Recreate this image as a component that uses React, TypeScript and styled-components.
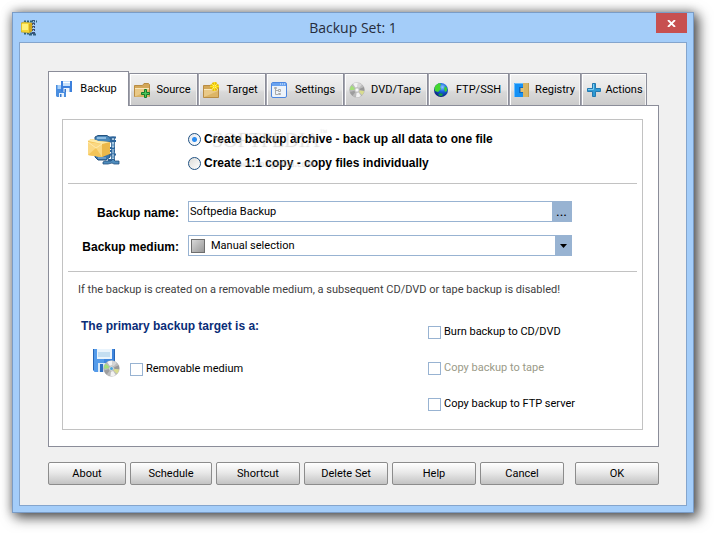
import React, { useState } from 'react';
import styled, { createGlobalStyle, css } from 'styled-components';

const GlobalStyle = createGlobalStyle`
  *, *::before, *::after { box-sizing: border-box; }
  body {
    margin: 0;
    background: #fff;
    color: #000;
    font: 11px/16px Roboto, "Liberation Sans", sans-serif;
  }
  button, input, select { font: inherit; color: inherit; margin: 0; }
`;

const Desktop = styled.div`
  padding: 12px 20px 20px 12px;
`;

const WindowFrame = styled.main`
  padding: 0 6px 6px;
  border: 1px solid #7a9cc6;
  background: #a4cdf9;
  box-shadow: 0 0 10px rgba(0, 0, 0, 0.35), 4px 4px 12px 1px rgba(0, 0, 0, 0.6);
`;

const TitleBar = styled.header`
  display: grid;
  grid-template-columns: 1fr auto 1fr;
  height: 29px;
`;

const TitleIcon = styled.span`
  align-self: center;
  display: flex;
  padding-left: 2px;
`;

const Title = styled.h1`
  margin: 0;
  align-self: center;
  font: 400 14px/20px "Open Sans", "Noto Sans", sans-serif;
  color: #262c3c;
`;

const CloseButton = styled.button`
  justify-self: end;
  display: flex;
  align-items: center;
  justify-content: center;
  width: 31px;
  height: 20px;
  padding: 0;
  border: 0;
  background: #c75050;
`;

const Client = styled.div`
  padding: 28px 27px 20px 28px;
  border: 1px solid #84a5cd;
  background: #f0f0f0;
`;

const TabList = styled.div`
  display: flex;
  align-items: flex-end;
`;

const Tab = styled.button<{ $width: number; $active?: boolean }>`
  display: flex;
  align-items: center;
  flex: 0 1 ${p => p.$width}px;
  height: 32px;
  padding: 1px 2px 0 4px;
  border: 1px solid #8b8d99;
  border-width: 1px 1px 0;
  background: linear-gradient(#f2f2f2, #e6e6e6 50%, #d9d9d9 58%, #cbcbcb);
  box-shadow: inset 1px 1px #fff, inset -1px 0 #f4f4f4;
  white-space: nowrap;

  & + & { border-left-color: #a4a5af; }

  ${p => p.$active && css`
    height: 35px;
    margin-bottom: -1px;
    padding: 0 5px 0 7px;
    background: #fff;
    box-shadow: none;
    position: relative;
  `}
`;

const TabText = styled.span`
  flex: 1;
  padding-left: 2px;
  text-align: center;
`;

const Panel = styled.section`
  padding: 13px 15px 16px 13px;
  border: 1px solid #8b8d99;
  background: #fff;
`;

const Group = styled.div`
  padding: 0 5px;
  border: 1px solid #c2c2c2;
`;

const Rule = styled.hr`
  margin: 0;
  border: 0;
  border-top: 1px solid #c2c2c2;
`;

const ModeSection = styled.div`
  position: relative;
  display: grid;
  grid-template-columns: 120px 1fr;
  align-items: center;
  padding: 7px 0 8px;
`;

const ModeIcon = styled.span`
  display: flex;
  padding-left: 20px;
`;

const ModeList = styled.div`
  display: flex;
  flex-direction: column;
`;

const ModeLabel = styled.label`
  display: flex;
  align-items: center;
  gap: 3px;
  height: 24px;
  font: 700 12px/16px "Liberation Sans", sans-serif;
`;

const Radio = styled.input`
  appearance: none;
  width: 13px;
  height: 13px;
  border: 1px solid #1f5182;
  border-radius: 50%;
  background: linear-gradient(135deg, #dcdcd8, #fff);

  &:checked {
    background: radial-gradient(circle, #2b8cf0 2px, transparent 3px), linear-gradient(135deg, #e4e8ee, #fff);
  }
`;

const Watermark = styled.div`
  position: absolute;
  left: 143px;
  top: 8px;
  pointer-events: none;
  color: rgba(255, 255, 255, 0.3);
  text-shadow: 1px 1px 1px rgba(0, 0, 0, 0.14);
  font: 400 20px/22px "Liberation Serif", serif;
`;

const WatermarkMark = styled.sup`
  font-size: 8px;
  line-height: 8px;
  vertical-align: top;
`;

const WatermarkSite = styled.div`
  padding: 6px 0 0 20px;
  font: 700 10px/14px "Liberation Serif", serif;
`;

const FieldSection = styled.div`
  display: grid;
  grid-template-columns: 111px 1fr;
  gap: 13px 9px;
  padding: 17px 65px 15px 0;
`;

const FieldLabel = styled.label`
  align-self: end;
  padding-bottom: 1px;
  text-align: right;
  font: 700 12px/16px "Liberation Sans", sans-serif;
`;

const FieldBox = styled.div`
  display: flex;
  align-items: center;
  height: 21px;
  border: 1px solid #98b3d2;
  background: #fff;
`;

const TextInput = styled.input`
  flex: 1;
  min-width: 0;
  height: 19px;
  padding: 0 1px;
  border: 0;
  outline: 0;
  background: none;
`;

const BrowseButton = styled.button`
  width: 19px;
  height: 19px;
  padding: 0;
  border: 0;
  background: #98b3d2;
  font: 400 14px/19px Roboto, sans-serif;
`;

const Swatch = styled.span`
  width: 14px;
  height: 14px;
  margin: 0 5px 0 2px;
  border: 1px solid #6e6e6e;
  background: linear-gradient(135deg, #d8d8d8, #989898);
`;

const Select = styled.select`
  appearance: none;
  flex: 1;
  min-width: 0;
  height: 19px;
  padding: 0 1px;
  border: 0;
  outline: 0;
  background: none;
`;

const SelectArrow = styled.span`
  display: flex;
  align-items: center;
  justify-content: center;
  width: 16px;
  height: 19px;
  background: #98b3d2;
`;

const Note = styled.p`
  margin: 0;
  padding: 10px 10px 0;
  color: #404040;
`;

const TargetSection = styled.div`
  display: grid;
  grid-template-columns: 360fr 209fr;
  padding-bottom: 17px;
`;

const PrimaryTarget = styled.div`
  display: flex;
  flex-direction: column;
  gap: 15px;
  padding: 20px 0 0 13px;
`;

const TargetHeading = styled.h2`
  margin: 0;
  color: #0a2d78;
  font: 700 12px/16px "Liberation Sans", sans-serif;
`;

const RemovableRow = styled.div`
  display: flex;
  align-items: flex-end;
  gap: 9px;
  padding-left: 12px;
`;

const ExtraTargets = styled.div`
  display: flex;
  flex-direction: column;
  gap: 20px;
  padding-top: 26px;
`;

const CheckLabel = styled.label<{ $disabled?: boolean }>`
  display: flex;
  align-items: center;
  gap: 3px;
  height: 16px;
  color: ${p => (p.$disabled ? '#9a9a88' : '#000')};
`;

const CheckBox = styled.input`
  appearance: none;
  width: 13px;
  height: 13px;
  border: 1px solid #98b3d2;
  background: #fff;

  &:checked { background: #98b3d2; box-shadow: inset 0 0 0 2px #fff; }
`;

const ButtonBar = styled.footer`
  display: flex;
  gap: 4px;
  padding-top: 15px;
`;

const PushButton = styled.button<{ $width?: number; $last?: boolean }>`
  flex: 0 1 ${p => p.$width ?? 84}px;
  height: 23px;
  padding: 0;
  border: 1px solid #8c8c8c;
  border-radius: 2px;
  background: linear-gradient(#fff, #e9e9e9 45%, #c3c3c3);
  ${p => p.$last && css`margin-left: auto;`}
`;

function ArchiveIcon({ size }: { size: number }) {
  return (
    <svg width={size} height={size} viewBox="0 0 32 32" aria-hidden="true">
      <path d="M7 5V2l3-1.500h9l4 3V7H8z" fill="#4a88ba" stroke="#24527f" />
      <path d="M9 3h9" stroke="#a6cceb" strokeWidth="1.500" />
      <path d="M7 19h15v3l-4 3h-8l-3-3z" fill="#3775ad" stroke="#24527f" />
      <path d="M10 23h8" stroke="#9dc3e2" />
      <path d="M23.500 2h3v24h-3z" fill="#76a9d1" stroke="#24527f" strokeWidth=".7" />
      <path d="M21 2.500h7M22 6h6M22 13h5M22 16h5M22 19.500h6M20 25h7" stroke="#2c659c" strokeWidth="2" />
      <path d="M25 3v22" stroke="#d8eaf6" strokeDasharray="2 2" />
      <path d="M15 27l2-1h6l2-2 2 2h4v3h-5l-2-1-4 1h-5z" fill="#4e8cbd" stroke="#24527f" strokeWidth=".8" />
      <path d="M0 6l3-2 5 1 2 1 11 1v11l-7 4-14-2z" fill="#f5c04e" />
      <path d="M0 7l14 2v13L0 20z" fill="#fbd882" />
      <path d="M14 9l8-2v12l-8 3z" fill="#ecb84a" />
      <path d="M0 20l8-7 6 9z" fill="#f3c458" />
      <path d="M0 7l8 6 6-4" fill="none" stroke="#ffefb8" strokeWidth=".8" />
      <path d="M0 6l3-2 5 1 2 1 12 1-8 2z" fill="#fdeaa8" />
    </svg>
  );
}

function TitleArchiveIcon() {
  return (
    <svg width="16" height="16" viewBox="0 0 16 16" aria-hidden="true">
      <path d="M3 1.500h8M3 13.500h8" stroke="#2c6278" strokeWidth="2" strokeDasharray="2 1" />
      <path d="M12.500 0v14" stroke="#3c4c78" strokeWidth="3" strokeDasharray="2 1" />
      <path d="M11 1.500h5M8 14.500h8" stroke="#31617e" strokeWidth="2" strokeDasharray="3 1" />
      <path d="M12.500 1v12" stroke="#a9cce0" strokeDasharray="1 2" />
      <path d="M0 3l3-1 8 1v8l-3 2-8-1z" fill="#f3d536" stroke="#a48a1a" strokeWidth=".5" />
      <path d="M1 4h6v6H1z" fill="#fff27a" />
      <path d="M8 4l3-1v8l-3 2z" fill="#d2a81d" />
    </svg>
  );
}

function FloppiesIcon() {
  return (
    <svg width="16" height="16" viewBox="0 0 16 16" aria-hidden="true">
      <path d="M0 4h10v12H1l-1-1z" fill="#4a8ee0" />
      <path d="M1.500 4h5v4h-5z" fill="#a9d0f8" />
      <path d="M3 12h5v4H3z" fill="#e9f3fd" />
      <path d="M4 13h1.500v3H4z" fill="#3a7cd0" />
      <path d="M5 0h11v11H6l-1-1z" fill="#3c80dc" />
      <path d="M7 0h7v5H7z" fill="#c8e2fb" />
      <path d="M7 1.500h7" stroke="#fff" />
      <path d="M7.500 7h6v4h-6z" fill="#edf5fd" />
      <path d="M8.500 8H10v3H8.500z" fill="#3473c8" />
    </svg>
  );
}

function FolderAddIcon() {
  return (
    <svg width="16" height="16" viewBox="0 0 16 16" aria-hidden="true">
      <path d="M.5 3.500h8l1.500-2h4.500l1 1v12H.5z" fill="#d3a758" stroke="#b98c43" />
      <path d="M1 6h14v8.500H1z" fill="#e9c987" />
      <path d="M1 6.500h14" stroke="#f9e7bb" />
      <path d="M1 14.500L15 8v6.500z" fill="#dcb566" />
      <path d="M10.500 7.500h2v3h3v2h-3v3h-2v-3h-3v-2h3z" fill="#4cc45a" stroke="#167c2a" />
    </svg>
  );
}

function FolderNewIcon() {
  return (
    <svg width="16" height="16" viewBox="0 0 16 16" aria-hidden="true">
      <path d="M.5 3.500h7l1 2h7v10H.5z" fill="#d3a758" stroke="#b98c43" />
      <path d="M1 7h14v8H1z" fill="#e9c987" />
      <path d="M1 7.500h14" stroke="#f9e7bb" />
      <path d="M1 15L15 9v6z" fill="#dcb566" />
      <circle cx="11.500" cy="4.500" r="3.200" fill="#fff27d" stroke="#e6be00" strokeWidth="2.400" strokeDasharray="1.800 .7" />
      <path d="M11.500 0v9M7 4.500h9" stroke="#ffe21c" />
    </svg>
  );
}

function SettingsIcon() {
  return (
    <svg width="16" height="16" viewBox="0 0 16 16" aria-hidden="true">
      <rect x=".5" y=".5" width="15" height="15" rx="1.500" fill="#edf3fa" stroke="#4c86e0" />
      <path d="M1 1h14v3H1z" fill="#6aa3ef" />
      <path d="M9 2h1m1 0h1m1 0h1" stroke="#e5f0ff" />
      <path d="M4.500 7v5.500H7M4.500 8.500H7" fill="none" stroke="#aaa" />
      <path d="M3.500 5.500h2v1h-2zM7.500 7.500h2v2h-2zM7.500 11.500h2v1h-2z" fill="#f6f6f6" stroke="#aaa" />
    </svg>
  );
}

function DiscShape() {
  return (
    <>
      <circle cx="8" cy="8" r="7.300" fill="#bcbcbc" stroke="#aaa" strokeWidth=".6" />
      <path d="M8 8L4 1.800A7.300 7.300 0 0 1 9 .8z" fill="#f3f3f3" />
      <path d="M8 8l1-7.200a7.300 7.300 0 0 1 4 2z" fill="#d6d6d6" />
      <path d="M8 8l6.800-3a7.300 7.300 0 0 1 .4 4z" fill="#989898" />
      <path d="M8 8l7.200 1a7.300 7.300 0 0 1-2 4z" fill="#d8dc8e" />
      <path d="M8 8l4 6.100A7.300 7.300 0 0 1 7 15.200z" fill="#f2f2f2" />
      <path d="M8 8l-4.500 5.700A7.300 7.300 0 0 1 1 10z" fill="#9d9d9d" />
      <path d="M8 8L.8 8A7.300 7.300 0 0 1 2.500 3.500z" fill="#a4df79" />
      <circle cx="8" cy="8" r="2.500" fill="#dedede" stroke="#aaa" strokeWidth=".6" />
      <circle cx="8" cy="8" r="1" fill="#fff" />
    </>
  );
}

function DiscIcon() {
  return <svg width="16" height="16" viewBox="0 0 16 16" aria-hidden="true"><DiscShape /></svg>;
}

function GlobeIcon() {
  return (
    <svg width="16" height="16" viewBox="0 0 16 16" aria-hidden="true">
      <defs>
        <radialGradient id="ocean" cx=".6" cy=".3" r=".75">
          <stop offset="0" stopColor="#8cc8ff" />
          <stop offset=".4" stopColor="#1767e0" />
          <stop offset="1" stopColor="#061a70" />
        </radialGradient>
      </defs>
      <circle cx="8" cy="8" r="7" fill="url(#ocean)" />
      <path d="M2.500 3.500L6 1l2 1-1 3 1 2-3 3-3-1c-.7-2-.5-4 .5-5.500z" fill="#43d62f" />
      <path d="M12 4l2 2v3l-2 1-1-3z" fill="#3acb35" />
      <path d="M7 11l3 1-1 2H7L5 13z" fill="#139a48" />
    </svg>
  );
}

function PuzzleIcon() {
  return (
    <svg width="16" height="16" viewBox="0 0 16 16" aria-hidden="true">
      <path d="M8 1h7v14H8z" fill="#d7b565" />
      <path d="M14.500 1v14" stroke="#c29d4e" />
      <path d="M0 1h9v4H5v6h4v4H0z" fill="#1591f5" />
      <path d="M5 5h4v6H5z" fill="#0a68c4" />
      <path d="M6.500 6H10v4H6.500z" fill="#e0bf72" />
      <path d="M.5 15V1.500H9" fill="none" stroke="#67bcff" />
    </svg>
  );
}

function PlusIcon() {
  return (
    <svg width="16" height="16" viewBox="0 0 16 16" aria-hidden="true">
      <path d="M6.500 1.500h3v5h5v3h-5v5h-3v-5h-5v-3h5z" fill="#2e9ad4" stroke="#2379b0" />
      <path d="M7.500 2v5.500H2" fill="none" stroke="#7dcdf2" />
    </svg>
  );
}

function RemovableIcon() {
  return (
    <svg width="28" height="28" viewBox="0 0 28 28" aria-hidden="true">
      <path d="M0 0h22v23H2l-2-2z" fill="#3e86de" />
      <path d="M0 0h11v23H2l-2-2z" fill="#549bea" />
      <path d="M4 0h15v10H4z" fill="#eaf4fc" />
      <path d="M5 3h12v5H5z" fill="#c4def1" />
      <path d="M5 14h12v9H5z" fill="#d8e9f8" />
      <path d="M7 15h3v8H7z" fill="#2f70c4" />
      <path d="M.5 0v21M21.500 0v22" stroke="#2565b8" />
      <g transform="translate(10 11) scale(1.060)"><DiscShape /></g>
      <circle cx="18.500" cy="19.500" r="1.500" fill="#48a7dc" />
    </svg>
  );
}

const tabs = [
  { name: 'Backup', width: 81, icon: <FloppiesIcon /> },
  { name: 'Source', width: 69, icon: <FolderAddIcon /> },
  { name: 'Target', width: 68, icon: <FolderNewIcon /> },
  { name: 'Settings', width: 78, icon: <SettingsIcon /> },
  { name: 'DVD/Tape', width: 84, icon: <DiscIcon /> },
  { name: 'FTP/SSH', width: 81, icon: <GlobeIcon /> },
  { name: 'Registry', width: 72, icon: <PuzzleIcon /> },
  { name: 'Actions', width: 66, icon: <PlusIcon /> },
];

const actions = [
  { name: 'About', width: 78 },
  { name: 'Schedule', width: 82 },
  { name: 'Shortcut' },
  { name: 'Delete Set' },
  { name: 'Help' },
  { name: 'Cancel' },
];

export default function App() {
  const [mode, setMode] = useState('archive');
  return (
    <Desktop>
      <GlobalStyle />
      <WindowFrame>
        <TitleBar>
          <TitleIcon><TitleArchiveIcon /></TitleIcon>
          <Title>Backup Set: 1</Title>
          <CloseButton type="button" aria-label="Close">
            <svg width="9" height="7" viewBox="0 0 9 7" aria-hidden="true">
              <path d="M1 0l7 7M8 0L1 7" stroke="#fff" strokeWidth="1.800" />
            </svg>
          </CloseButton>
        </TitleBar>
        <Client>
          <TabList role="tablist">
            {tabs.map((t, i) => (
              <Tab key={t.name} type="button" role="tab" aria-selected={i === 0} $width={t.width} $active={i === 0}>
                {t.icon}
                <TabText>{t.name}</TabText>
              </Tab>
            ))}
          </TabList>
          <Panel role="tabpanel" aria-label="Backup">
            <Group>
              <ModeSection>
                <ModeIcon><ArchiveIcon size={32} /></ModeIcon>
                <ModeList role="radiogroup" aria-label="Backup type">
                  <ModeLabel>
                    <Radio type="radio" name="mode" checked={mode === 'archive'} onChange={() => setMode('archive')} />
                    Create backup archive - back up all data to one file
                  </ModeLabel>
                  <ModeLabel>
                    <Radio type="radio" name="mode" checked={mode === 'copy'} onChange={() => setMode('copy')} />
                    Create 1:1 copy - copy files individually
                  </ModeLabel>
                </ModeList>
                <Watermark aria-hidden="true">
                  SOFTPEDIA<WatermarkMark>™</WatermarkMark>
                  <WatermarkSite>www.softpedia.com</WatermarkSite>
                </Watermark>
              </ModeSection>
              <Rule />
              <FieldSection>
                <FieldLabel htmlFor="backup-name">Backup name:</FieldLabel>
                <FieldBox>
                  <TextInput id="backup-name" type="text" defaultValue="Softpedia Backup" />
                  <BrowseButton type="button" aria-label="Browse">...</BrowseButton>
                </FieldBox>
                <FieldLabel htmlFor="backup-medium">Backup medium:</FieldLabel>
                <FieldBox>
                  <Swatch />
                  <Select id="backup-medium" defaultValue="manual">
                    <option value="manual">Manual selection</option>
                  </Select>
                  <SelectArrow>
                    <svg width="7" height="4" viewBox="0 0 7 4" aria-hidden="true">
                      <path d="M0 0h7L3.500 4z" />
                    </svg>
                  </SelectArrow>
                </FieldBox>
              </FieldSection>
              <Rule />
              <Note>If the backup is created on a removable medium, a subsequent CD/DVD or tape backup is disabled!</Note>
              <TargetSection>
                <PrimaryTarget>
                  <TargetHeading>The primary backup target is a:</TargetHeading>
                  <RemovableRow>
                    <RemovableIcon />
                    <CheckLabel><CheckBox type="checkbox" />Removable medium</CheckLabel>
                  </RemovableRow>
                </PrimaryTarget>
                <ExtraTargets>
                  <CheckLabel><CheckBox type="checkbox" />Burn backup to CD/DVD</CheckLabel>
                  <CheckLabel $disabled><CheckBox type="checkbox" disabled />Copy backup to tape</CheckLabel>
                  <CheckLabel><CheckBox type="checkbox" />Copy backup to FTP server</CheckLabel>
                </ExtraTargets>
              </TargetSection>
            </Group>
          </Panel>
          <ButtonBar>
            {actions.map(a => <PushButton key={a.name} type="button" $width={a.width}>{a.name}</PushButton>)}
            <PushButton type="button" $last>OK</PushButton>
          </ButtonBar>
        </Client>
      </WindowFrame>
    </Desktop>
  );
}
